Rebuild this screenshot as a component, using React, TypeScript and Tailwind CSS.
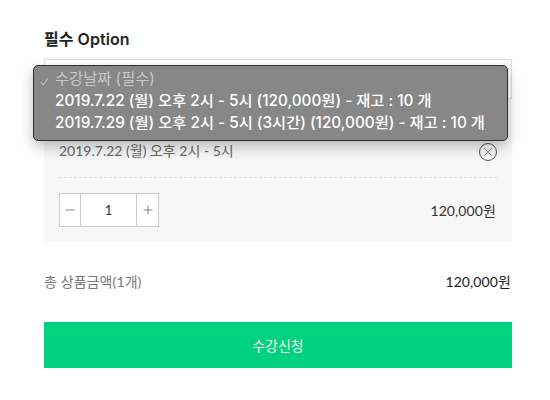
import { Minus, Plus, X } from 'lucide-react';

const latoKr = { fontFamily: 'Lato, "Noto Sans CJK KR", sans-serif' };

const popupOptions = [
  '2019.7.22 (월) 오후 2시 - 5시 (120,000원) - 재고 : 10 개',
  '2019.7.29 (월) 오후 2시 - 5시 (3시간) (120,000원) - 재고 : 10 개',
];

export default function App() {
  return (
    <div className="relative w-[550px] h-[400px] overflow-hidden bg-white pt-[29px] pl-[44px]" style={latoKr}>
      <h2 className="text-[16px] leading-[20px] font-semibold tracking-[0.05px] text-[#222] font-['Inter','Noto_Sans_CJK_KR',sans-serif]">필수 Option</h2>

      <div className="mt-[10px] h-[40px] w-[468px] border border-[#ddd] bg-white" />

      <div className="w-[468px] h-[143px] bg-[#f7f7f7] px-[15px]">
        <div className="flex h-[79px] items-end justify-between border-b border-dashed border-[#e0e0e0] pb-[16px]">
          <span className="text-[14px] leading-[20px] text-[#666]">2019.7.22 (월) 오후 2시 - 5시</span>
          <span className="flex h-[18px] w-[18px] items-center justify-center rounded-full border border-[#555] text-[#555]">
            <X size={16} strokeWidth={1} />
          </span>
        </div>
        <div className="mt-[15px] flex items-center justify-between">
          <div className="flex h-[34px] w-[100px] border border-[#ccc] bg-white text-[#555]">
            <span className="flex w-[21px] items-center justify-center border-r border-[#ccc]">
              <Minus size={14} strokeWidth={1.2} />
            </span>
            <span className="flex-1 text-center text-[13px] leading-[32px] text-[#333]">1</span>
            <span className="flex w-[22px] items-center justify-center border-l border-[#ccc]">
              <Plus size={14} strokeWidth={1.2} />
            </span>
          </div>
          <span className="mr-px text-[14px] tracking-[0.1px] text-[#333]">120,000원</span>
        </div>
      </div>

      <div className="mt-[30px] flex w-[468px] items-center justify-between leading-[20px]">
        <span className="text-[14px] tracking-[0.1px] text-[#777]">총 상품금액(1개)</span>
        <span className="mr-px text-[14px] tracking-[0.1px] text-[#222]">120,000원</span>
      </div>

      <button className="mt-[30px] h-[46px] w-[468px] bg-[#00d27f] text-center text-[14px] text-[#f4f4f4]">수강신청</button>

      <div className="absolute left-[33px] top-[65px] h-[76px] w-[475px] rounded-[5px] border border-[#2e2e2e] bg-[#878787] pl-[21px] pt-[2px] shadow-[0_6px_14px_rgba(0,0,0,0.25)] font-['Inter','Noto_Sans_CJK_KR',sans-serif] text-[15.3px] leading-[22px]">
        <div className="relative text-[#c8c8c8]">
          <svg className="absolute left-[-15px] top-[9px]" width="9" height="9" viewBox="0 0 9 9" fill="none" stroke="#c8c8c8" strokeWidth="1">
            <path d="M1 5 L3.2 8 L8 1" />
          </svg>
          수강날짜 (필수)
        </div>
        {popupOptions.map((o) => (
          <div key={o} className="font-medium text-white whitespace-nowrap">{o}</div>
        ))}
      </div>
    </div>
  );
}
